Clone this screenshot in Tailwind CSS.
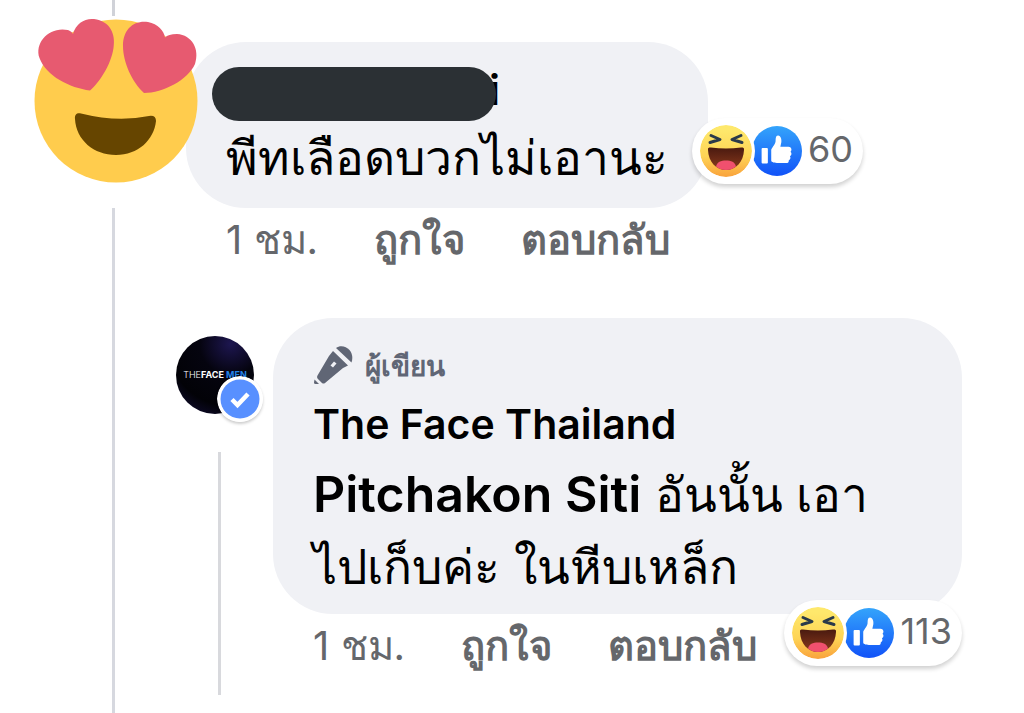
<!DOCTYPE html>
<html lang="th">
<head>
    <meta charset="UTF-8">
    <meta name="viewport" content="width=device-width, initial-scale=1.0">
    <title>ความคิดเห็น</title>
    <script src="https://cdn.jsdelivr.net/npm/@tailwindcss/browser@4"></script>
</head>
<body class="bg-white font-['Inter','Noto_Sans',sans-serif] text-black">

    <!-- reaction icons -->
    <svg class="absolute size-0" aria-hidden="true">
        <defs>
            <linearGradient id="haha-face" x1="0" y1="0" x2="0" y2="1">
                <stop offset="0.1" stop-color="#fee86c"/>
                <stop offset="0.6" stop-color="#fed455"/>
                <stop offset="1" stop-color="#f9a23c"/>
            </linearGradient>
            <linearGradient id="haha-mouth" x1="0" y1="0" x2="0" y2="1">
                <stop offset="0" stop-color="#4a1a10"/>
                <stop offset="1" stop-color="#8a3a1c"/>
            </linearGradient>
            <linearGradient id="like-bg" x1="0" y1="0" x2="0" y2="1">
                <stop offset="0" stop-color="#34a4fb"/>
                <stop offset="1" stop-color="#1152f8"/>
            </linearGradient>
            <symbol id="haha" viewBox="0 0 52 52">
                <circle cx="26" cy="26" r="26" fill="url(#haha-face)"/>
                <path d="M8 25C7.500 23 9 22.500 11 22.600Q26 24.500 41 22.600C43 22.500 44.500 23 44 25C43.500 37 36 45 26 45S8.500 37 8 25Z" fill="url(#haha-mouth)"/>
                <path d="M16 41.500C17 37 21 35.500 26 35.500S35 37 36 41.500C33 44 30 45 26 45S19 44 16 41.500Z" fill="#f0506e"/>
                <path d="M11 10.500L20 14.500L10 17.500M41 10.500L32 14.500L42 17.500" fill="none" stroke="#2a3a4a" stroke-width="3" stroke-linecap="round" stroke-linejoin="round"/>
            </symbol>
            <symbol id="like" viewBox="0 0 52 52">
                <circle cx="26" cy="26" r="26" fill="url(#like-bg)"/>
                <rect x="10" y="23" width="6.500" height="16" rx="1" fill="#fff"/>
                <path d="M20 25C20 23 24 19.500 24.500 16C24.700 13 24.500 10 27 9.800C30 9.700 31 14 30.500 17L29.500 21.500H38C41 21.500 42 25 40 26.800C41.500 28 41.500 30.500 39.500 31.500C40.500 33 40 35 38.200 35.800C38.500 37.500 37.500 38.500 35.500 38.500H27C24 38.500 20 38 20 36Z" fill="#fff"/>
            </symbol>
        </defs>
    </svg>

    <main class="flex min-h-screen">

        <!-- thread line + commenter avatar -->
        <div class="flex w-44 shrink-0 flex-col">
            <div class="ml-28 h-4 w-[3px] bg-[#d0d2d8]"></div>
            <svg class="relative z-10 ml-8 h-48 w-[168px] shrink-0" viewBox="32 16 168 192" role="img" aria-label="รูปโปรไฟล์">
                <circle cx="116" cy="101" r="81.500" fill="#ffcc4d"/>
                <g fill="#e75a70">
                    <path d="M90 90.500C70 88 46 76 39.500 58C34 42 50 26 68 30C71 31 72.500 33 73 34C76 23 85 18 94 19C110 21 116 34 113.500 48C111 65 99 83 90 90.500Z"/>
                    <path d="M144 93C132 82 123 62 123 46C123 29 134 20 148 22C158 24 164 31 165 37.500C167 35.500 171 34 177 34C192 35 200 49 195 64C188 80 163 93 144 93Z"/>
                </g>
                <path d="M75 119C74.500 114.500 77 112.500 81 113.500Q117 122.500 149 116Q156 115 156 121C154 140 138 155 116 155C94 155 76 140 75 119Z" fill="#664500"/>
            </svg>
            <div class="ml-28 w-[3px] flex-1 bg-[#d6d8df]"></div>
        </div>

        <div class="min-w-0 flex-1 pt-[42px] pr-[62px]">

            <!-- comment -->
            <article class="ml-[10px]">
                <div class="relative h-[166px] w-[522px] rounded-[60px] bg-[#f0f1f5] px-10 pt-6">
                    <div class="-ml-[14px] flex h-[56px] items-center text-[42px] font-semibold">
                        <span class="relative z-10 h-[54px] w-[284px] rounded-full bg-[#2b3034]"></span>
                        <span class="-ml-[7px] leading-[56px] pb-2">i</span>
                    </div>
                    <p class="text-[48px] leading-[72px] whitespace-nowrap">พีทเลือดบวกไม่เอานะ</p>
                    <button class="absolute top-[76px] left-[506px] flex h-[66px] items-center rounded-full bg-white pr-[10px] pl-2 shadow-[0_3px_4px_rgba(0,0,0,0.18)]">
                        <svg class="relative z-10 size-[52px] rounded-full ring-3 ring-white"><use href="#haha"/></svg>
                        <svg class="size-[50px]"><use href="#like"/></svg>
                        <span class="ml-[6px] text-[36px] leading-[60px] pb-1 text-[#65676b]">60</span>
                    </button>
                </div>
                <div class="flex h-16 items-center gap-14 pl-10 text-[40px] whitespace-nowrap text-[#65676b]">
                    <time>1 ชม.</time>
                    <button class="font-semibold">ถูกใจ</button>
                    <button class="font-semibold">ตอบกลับ</button>
                </div>
            </article>

            <!-- reply from the page -->
            <article class="mt-[46px] flex">
                <div class="flex w-[97px] shrink-0 flex-col">
                    <div class="relative mt-[18px] flex size-[78px] items-center justify-center rounded-full bg-[radial-gradient(circle_at_70%_10%,#1d1650,#05040f_35%,#020207_70%,#151040)]">
                        <span class="text-[9px] font-bold whitespace-nowrap text-white"><span class="font-light">THE</span>FACE<span class="text-[#2383e8]"> MEN</span></span>
                        <svg class="absolute top-10 left-[41px] size-[46px] rounded-full shadow-[0_2px_3px_rgba(0,0,0,0.2)]" viewBox="0 0 46 46" role="img" aria-label="ยืนยันแล้ว">
                            <circle cx="23" cy="23" r="23" fill="#fff"/>
                            <circle cx="23" cy="23" r="19.500" fill="#5890ff"/>
                            <path d="M15 23.500L20.500 29L31 18" fill="none" stroke="#fff" stroke-width="4.500"/>
                        </svg>
                    </div>
                    <div class="mt-[38px] ml-[42px] h-[243px] w-[3px] bg-[#d8d9dd]"></div>
                </div>
                <div class="min-w-0 flex-1">
                    <div class="relative h-[296px] rounded-[60px] bg-[#f0f1f5] px-10 pt-6">
                        <div class="flex h-12 items-center gap-3 text-[28px] font-semibold text-[#606675]">
                            <svg class="size-10" viewBox="0 0 40 40" fill="#606675" aria-hidden="true">
                                <path d="M23 2C27 -1 33 0 36.500 4C39.500 7.500 40 12 38.500 16.500Z"/>
                                <path fill-rule="evenodd" d="M20 5L35 19.500L30 22L12 37Q10.500 38 9 37L4.500 32.500Q3.500 31 4.500 29.500L16 10ZM21 15.500L17.500 19.500L20 21.500L23.500 17.500Z"/>
                                <path d="M1.500 33.500L6 38H2.500Q1 38 1 36.500Z"/>
                            </svg>
                            <span>ผู้เขียน</span>
                        </div>
                        <h2 class="text-[41px] leading-[68px] font-semibold">The Face Thailand</h2>
                        <p class="text-[48px] leading-[72px]"><a href="#" class="text-[50px] font-semibold">Pitchakon Siti</a> อันนั้น เอา<br>ไปเก็บค่ะ ในหีบเหล็ก</p>
                        <button class="absolute top-[282px] right-0 flex h-[66px] items-center rounded-full bg-white pr-[10px] pl-2 shadow-[0_3px_4px_rgba(0,0,0,0.18)]">
                            <svg class="relative z-10 size-[52px] rounded-full ring-3 ring-white"><use href="#haha"/></svg>
                            <svg class="size-[50px]"><use href="#like"/></svg>
                            <span class="ml-[6px] text-[36px] leading-[60px] pb-1 text-[#65676b]">113</span>
                        </button>
                    </div>
                    <div class="flex h-16 items-center gap-14 pl-10 text-[40px] whitespace-nowrap text-[#65676b]">
                        <time>1 ชม.</time>
                        <button class="font-semibold">ถูกใจ</button>
                        <button class="font-semibold">ตอบกลับ</button>
                    </div>
                </div>
            </article>
        </div>
    </main>
</body>
</html>
